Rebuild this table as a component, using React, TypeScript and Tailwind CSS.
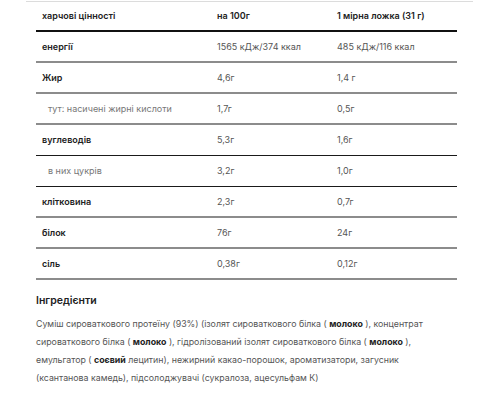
import React from 'react';

type Row = {
  label: string;
  per100: string;
  perScoop: string;
  sub?: boolean;
  dark?: boolean;
};

const rows: Row[] = [
  { label: 'енергії', per100: '1565 кДж/374 ккал', perScoop: '485 кДж/116 ккал' },
  { label: 'Жир', per100: '4,6г', perScoop: '1,4 г' },
  { label: 'тут: насичені жирні кислоти', per100: '1,7г', perScoop: '0,5г', sub: true },
  { label: 'вуглеводів', per100: '5,3г', perScoop: '1,6г', dark: true },
  { label: 'в них цукрів', per100: '3,2г', perScoop: '1,0г', sub: true, dark: true },
  { label: 'клітковина', per100: '2,3г', perScoop: '0,7г' },
  { label: 'білок', per100: '76г', perScoop: '24г' },
  { label: 'сіль', per100: '0,38г', perScoop: '0,12г' },
];

const B = ({ children }: { children: React.ReactNode }) => (
  <b className="font-bold text-[#222]">{children}</b>
);

export default function App() {
  return (
    <div className="w-[500px] h-[400px] bg-white pt-[1px] font-['Inter',sans-serif] text-[9px] text-[#555]">
      <div className="ml-[26px] w-[447px] border-t border-[#dcdcdc] pl-[10px] pr-[16px]">
        {/* nutrition table */}
        <div className="grid grid-cols-[175px_120px_1fr] h-[30px] box-border border-b-2 border-[#111] items-center font-semibold text-[#222]">
          <div className="pl-[6px]">харчові цінності</div>
          <div className="pl-[6px]">на 100г</div>
          <div className="pl-[6px]">1 мірна ложка (31 г)</div>
        </div>
        {rows.map(r => (
          <div
            key={r.label}
            className={
              'grid grid-cols-[175px_120px_1fr] h-[31px] box-border items-center ' +
              (r.dark ? 'border-b border-[#1a1a1a]' : 'border-b-2 border-[#8c8c8c]')
            }
          >
            <div className={r.sub ? 'pl-[12px] text-[#777]' : 'pl-[6px] font-semibold text-[#222]'}>{r.label}</div>
            <div className="pl-[6px]">{r.per100}</div>
            <div className="pl-[6px]">{r.perScoop}</div>
          </div>
        ))}

        {/* ingredients */}
        <div className="mt-[13px] text-[10.5px] font-semibold text-[#222]">Інгредієнти</div>
        <div className="mt-[6px] text-[8.8px] leading-[18px] whitespace-nowrap">
          <div>Суміш сироваткового протеїну (93%) (ізолят сироваткового білка ( <B>молоко</B> ), концентрат</div>
          <div>сироваткового білка ( <B>молоко</B> ), гідролізований ізолят сироваткового білка ( <B>молоко</B> ),</div>
          <div>емульгатор ( <B>соєвий</B> лецитин), нежирний какао-порошок, ароматизатори, загусник</div>
          <div>(ксантанова камедь), підсолоджувачі (сукралоза, ацесульфам К)</div>
        </div>
      </div>
    </div>
  );
}
